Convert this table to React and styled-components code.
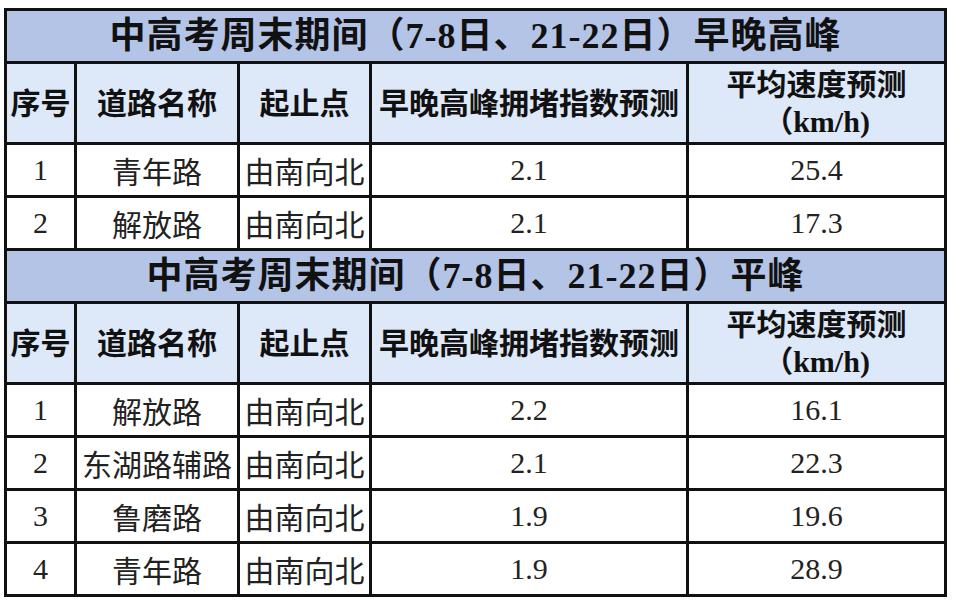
import React from "react";
import styled, { createGlobalStyle } from "styled-components";

const Global = createGlobalStyle`
  html, body { margin: 0; padding: 0; background: #ffffff; }
  body { width: 960px; height: 608px; overflow: hidden; }
`;

const Page = styled.div`
  padding: 8px 0 0 4px;
`;

const Table = styled.table`
  width: 940px;
  border-collapse: collapse;
  table-layout: fixed;
  border: 3px solid #111;
`;

const TitleCell = styled.td`
  height: 50px;
  padding: 0;
  background: #b4c4e7;
  border: 3px solid #111;
  text-align: center;
  vertical-align: middle;
  font-family: "Liberation Serif", "Noto Sans CJK SC", serif;
  font-weight: 700;
  font-size: 36px;
  letter-spacing: 1px;
  line-height: 1;
  color: #111;
  white-space: nowrap;
`;

const HeadCell = styled.td`
  height: 78px;
  padding: 0;
  background: #dde8f8;
  border: 3px solid #111;
  text-align: center;
  vertical-align: middle;
  font-family: "Liberation Serif", "Noto Sans CJK SC", sans-serif;
  font-weight: 700;
  font-size: 30px;
  line-height: 37px;
  color: #111;
  white-space: nowrap;
  overflow: hidden;
`;

const Cell = styled.td`
  height: 50px;
  padding: 0;
  background: #ffffff;
  border: 3px solid #111;
  text-align: center;
  vertical-align: middle;
  font-family: ${(p) =>
    p.$num ? `"Liberation Serif", serif` : `"Noto Sans CJK SC", sans-serif`};
  font-size: 30px;
  line-height: 1;
  color: #222;
  white-space: nowrap;
  overflow: hidden;
`;

const Unit = styled.span`
  display: block;
`;

const widths = [70, 163, 132, 317, 258];

const Header = () => (
  <tr>
    <HeadCell>序号</HeadCell>
    <HeadCell>道路名称</HeadCell>
    <HeadCell>起止点</HeadCell>
    <HeadCell>早晚高峰拥堵指数预测</HeadCell>
    <HeadCell>
      <Unit>平均速度预测</Unit>
      <Unit>（km/h)</Unit>
    </HeadCell>
  </tr>
);

const DataRow = ({ row }) => (
  <tr>
    <Cell $num>{row[0]}</Cell>
    <Cell>{row[1]}</Cell>
    <Cell>{row[2]}</Cell>
    <Cell $num>{row[3]}</Cell>
    <Cell $num>{row[4]}</Cell>
  </tr>
);

const peak = [
  ["1", "青年路", "由南向北", "2.1", "25.4"],
  ["2", "解放路", "由南向北", "2.1", "17.3"],
];

const flat = [
  ["1", "解放路", "由南向北", "2.2", "16.1"],
  ["2", "东湖路辅路", "由南向北", "2.1", "22.3"],
  ["3", "鲁磨路", "由南向北", "1.9", "19.6"],
  ["4", "青年路", "由南向北", "1.9", "28.9"],
];

export default function App() {
  return (
    <Page>
      <Global />
      <Table>
        <colgroup>
          {widths.map((w, i) => (
            <col key={i} style={{ width: w }} />
          ))}
        </colgroup>
        <tbody>
          <tr>
            <TitleCell colSpan={5}>中高考周末期间（7-8日、21-22日）早晚高峰</TitleCell>
          </tr>
          <Header />
          {peak.map((r, i) => (
            <DataRow key={"p" + i} row={r} />
          ))}
          <tr>
            <TitleCell colSpan={5}>中高考周末期间（7-8日、21-22日）平峰</TitleCell>
          </tr>
          <Header />
          {flat.map((r, i) => (
            <DataRow key={"f" + i} row={r} />
          ))}
        </tbody>
      </Table>
    </Page>
  );
}
